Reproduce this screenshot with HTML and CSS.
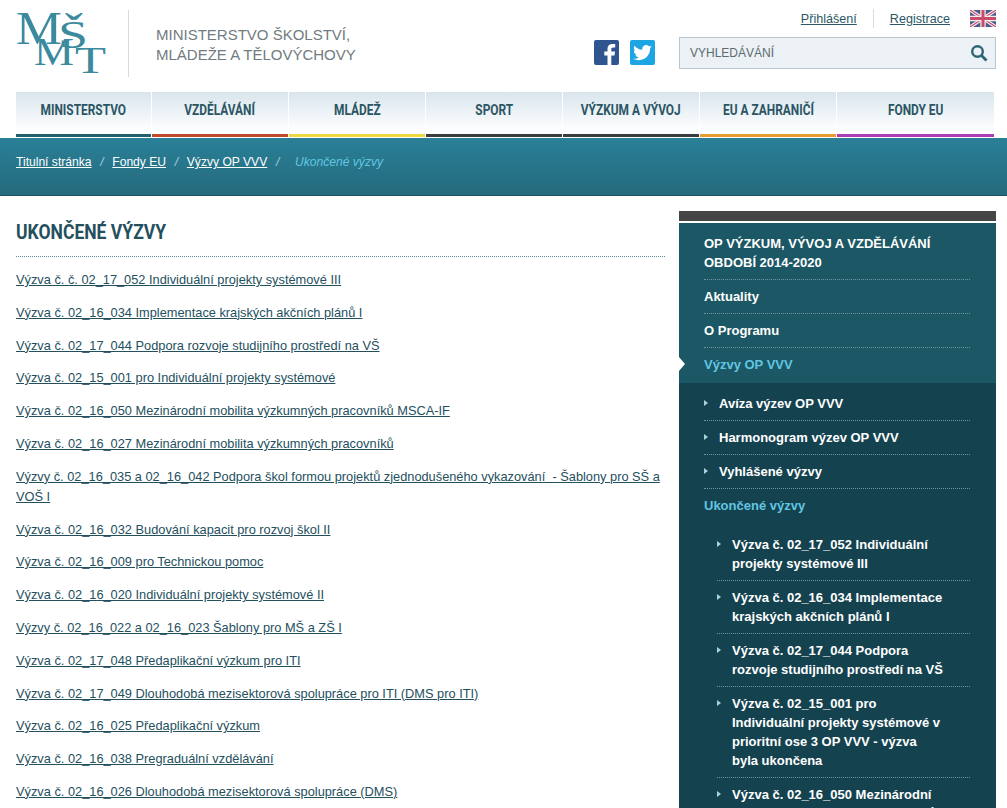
FILE: index.html
```html
<!DOCTYPE html>
<html lang="cs">
  <head>
    <meta charset="UTF-8" />
    <title>Ukončené výzvy</title>
    <meta name="viewport" content="width=device-width, initial-scale=1" />
    <link rel="stylesheet" href="styles.css">
  </head>
  <body>
    <header class="top">
      <a class="logo" href="#">
        <svg width="92" height="66" viewBox="0 0 92 66">
          <text x="0" y="32" class="logo-m1" textLength="46" lengthAdjust="spacingAndGlyphs">M</text>
          <text x="42" y="36" class="logo-s" textLength="30" lengthAdjust="spacingAndGlyphs">Š</text>
          <text x="18" y="53" class="logo-m2" textLength="40" lengthAdjust="spacingAndGlyphs">M</text>
          <text x="59" y="61" class="logo-t" textLength="31" lengthAdjust="spacingAndGlyphs">T</text>
        </svg>
      </a>
      <div class="ministry">MINISTERSTVO ŠKOLSTVÍ,<br />MLÁDEŽE A TĚLOVÝCHOVY</div>
      <div class="social">
        <a class="fb" href="#">
          <svg width="25" height="25" viewBox="0 0 25 25"><path d="M17.3 25v-9.6h3.2l.5-3.8h-3.7V9.3c0-1.1.3-1.8 1.9-1.8h2V4.1c-.4 0-1.500-.1-2.900-.1-2.900 0-4.800 1.700-4.800 4.900v2.700H10.300v3.800h3.200V25z" /></svg>
        </a>
        <a class="tw" href="#">
          <svg width="19" height="16" viewBox="0 0 24 20"><path d="M24 2.400c-.9.4-1.800.7-2.800.8 1-.6 1.800-1.600 2.200-2.700-1 .6-2 1-3.100 1.200C19.300.7 18 0 16.600 0c-2.700 0-4.900 2.200-4.900 4.900 0 .4 0 .8.100 1.100C7.700 5.800 4.100 3.800 1.700.9c-.4.700-.7 1.600-.7 2.500 0 1.700.9 3.200 2.200 4.100-.8 0-1.600-.2-2.200-.6v.1c0 2.400 1.700 4.400 3.900 4.800-.4.100-.8.200-1.300.2-.3 0-.6 0-.9-.1.600 2 2.400 3.400 4.600 3.400-1.700 1.300-3.800 2.100-6.100 2.100-.4 0-.8 0-1.200-.1C2.200 18.200 4.800 19 7.500 19c9.100 0 14-7.500 14-14v-.6c1-.7 1.800-1.600 2.500-2z" /></svg>
        </a>
      </div>
      <div class="tools">
        <div class="userbar">
          <a href="#">Přihlášení</a>
          <span class="sep"></span>
          <a href="#">Registrace</a>
          <svg class="flag" width="26" height="17" viewBox="0 0 26 17">
            <rect width="26" height="17" fill="#3d4a80" />
            <path d="M0 0L26 17M26 0L0 17" stroke="#f2eef0" stroke-width="3.400" />
            <path d="M0 0L26 17M26 0L0 17" stroke="#c8385a" stroke-width="1.100" />
            <path d="M13 0V17M0 8.500H26" stroke="#f2eef0" stroke-width="5.400" />
            <path d="M13 0V17M0 8.500H26" stroke="#c8385a" stroke-width="3" />
          </svg>
        </div>
        <form class="search">
          <span class="search-label">VYHLEDÁVÁNÍ</span>
          <svg width="18" height="18" viewBox="0 0 18 18">
            <circle cx="7.500" cy="7.500" r="5.300" fill="none" stroke="#2b6475" stroke-width="2.400" />
            <path d="M11.500 11.500L16.500 16.500" stroke="#2b6475" stroke-width="2.800" />
          </svg>
        </form>
      </div>
    </header>

    <nav class="mainnav">
      <a class="c-teal" href="#"><span>MINISTERSTVO</span></a>
      <a class="c-red" href="#"><span>VZDĚLÁVÁNÍ</span></a>
      <a class="c-yellow" href="#"><span>MLÁDEŽ</span></a>
      <a class="c-dark" href="#"><span>SPORT</span></a>
      <a class="c-dark" href="#"><span>VÝZKUM A VÝVOJ</span></a>
      <a class="c-orange" href="#"><span>EU A ZAHRANIČÍ</span></a>
      <a class="c-purple" href="#"><span>FONDY EU</span></a>
    </nav>

    <div class="crumbs">
      <a href="#">Titulní stránka</a>
      <i>/</i>
      <a href="#">Fondy EU</a>
      <i>/</i>
      <a href="#">Výzvy OP VVV</a>
      <i>/</i>
      <em>Ukončené výzvy</em>
    </div>

    <div class="page">
      <main class="content">
        <h1><span>UKONČENÉ VÝZVY</span></h1>
        <ul class="calls">
          <li><a href="#">Výzva č. č. 02_17_052 Individuální projekty systémové III</a></li>
          <li><a href="#">Výzva č. 02_16_034 Implementace krajských akčních plánů I</a></li>
          <li><a href="#">Výzva č. 02_17_044 Podpora rozvoje studijního prostředí na VŠ</a></li>
          <li><a href="#">Výzva č. 02_15_001 pro Individuální projekty systémové</a></li>
          <li><a href="#">Výzva č. 02_16_050 Mezinárodní mobilita výzkumných pracovníků MSCA-IF</a></li>
          <li><a href="#">Výzva č. 02_16_027 Mezinárodní mobilita výzkumných pracovníků</a></li>
          <li><a href="#">Výzvy č. 02_16_035 a 02_16_042 Podpora škol formou projektů zjednodušeného vykazování &nbsp;- Šablony pro SŠ a VOŠ I</a></li>
          <li><a href="#">Výzva č. 02_16_032 Budování kapacit pro rozvoj škol II</a></li>
          <li><a href="#">Výzva č. 02_16_009 pro Technickou pomoc</a></li>
          <li><a href="#">Výzva č. 02_16_020 Individuální projekty systémové II</a></li>
          <li><a href="#">Výzvy č. 02_16_022 a 02_16_023 Šablony pro MŠ a ZŠ I</a></li>
          <li><a href="#">Výzva č. 02_17_048 Předaplikační výzkum pro ITI</a></li>
          <li><a href="#">Výzva č. 02_17_049 Dlouhodobá mezisektorová spolupráce pro ITI (DMS pro ITI)</a></li>
          <li><a href="#">Výzva č. 02_16_025 Předaplikační výzkum</a></li>
          <li><a href="#">Výzva č. 02_16_038 Pregraduální vzdělávání</a></li>
          <li><a href="#">Výzva č. 02_16_026 Dlouhodobá mezisektorová spolupráce (DMS)</a></li>
        </ul>
      </main>

      <aside class="side">
        <div class="side-bar"></div>
        <div class="side-top">
          <a class="row row-title" href="#">OP VÝZKUM, VÝVOJ A VZDĚLÁVÁNÍ<br />OBDOBÍ 2014-2020</a>
          <a class="row" href="#">Aktuality</a>
          <a class="row" href="#">O Programu</a>
          <a class="row row-active" href="#">Výzvy OP VVV</a>
        </div>
        <div class="side-sub">
          <a class="row row-arrow" href="#">Avíza výzev OP VVV</a>
          <a class="row row-arrow" href="#">Harmonogram výzev OP VVV</a>
          <a class="row row-arrow" href="#">Vyhlášené výzvy</a>
          <a class="row row-current" href="#">Ukončené výzvy</a>
          <div class="side-deep">
            <a class="deep" href="#">Výzva č. 02_17_052 Individuální<br />projekty systémové III</a>
            <a class="deep" href="#">Výzva č. 02_16_034 Implementace<br />krajských akčních plánů I</a>
            <a class="deep" href="#">Výzva č. 02_17_044 Podpora<br />rozvoje studijního prostředí na VŠ</a>
            <a class="deep" href="#">Výzva č. 02_15_001 pro<br />Individuální projekty systémové v<br />prioritní ose 3 OP VVV - výzva<br />byla ukončena</a>
            <a class="deep" href="#">Výzva č. 02_16_050 Mezinárodní<br />mobilita výzkumných pracovníků</a>
          </div>
        </div>
      </aside>
    </div>
  </body>
</html>
```

FILE: styles.css
```css
html,
body {
  height: 808px;
  overflow: hidden;
}
body {
  margin: 0;
  background: #fff;
  color: #24505e;
  font-family: "Liberation Sans", Arial, sans-serif;
  font-size: 12.800px;
}
a {
  color: inherit;
}

/* header */
.top {
  display: flex;
  height: 92px;
  box-sizing: border-box;
  padding-left: 16px;
}
.logo {
  display: block;
  width: 113px;
  height: 67px;
  margin-top: 10px;
  padding-top: 2px;
  box-sizing: border-box;
  border-right: 1px solid #d5dcdf;
}
.logo svg {
  overflow: visible;
}
.logo text {
  font-family: "Liberation Serif", serif;
  fill: #3b8a9e;
}
.logo-m1 {
  font-size: 46px;
}
.logo-s {
  font-size: 40px;
}
.logo-m2 {
  font-size: 40px;
}
.logo-t {
  font-size: 38px;
}
.ministry {
  margin: 25px 0 0 27px;
  color: #717b80;
  font-size: 15px;
  line-height: 20px;
}
.social {
  display: flex;
  gap: 11px;
  margin: 40px 0 0 auto;
}
.social a {
  display: flex;
  align-items: center;
  justify-content: center;
  width: 25px;
  height: 25px;
  border-radius: 2px;
  overflow: hidden;
}
.social svg {
  fill: #fff;
}
.fb {
  background: #2f5590;
}
.tw {
  background: #1ca5e2;
}
.tools {
  width: 317px;
  margin: 0 11px 0 24px;
}
.userbar {
  display: flex;
  align-items: center;
  justify-content: flex-end;
  height: 27px;
  padding-top: 10px;
  box-sizing: border-box;
  font-size: 12.600px;
  color: #2c5866;
}
.sep {
  width: 1px;
  height: 19px;
  margin: 0 16px;
  background: #d5dcdf;
}
.flag {
  margin-left: 20px;
  opacity: 0.9;
}
.search {
  display: flex;
  align-items: center;
  justify-content: space-between;
  height: 32px;
  margin: 10px 0 0;
  padding: 0 7px 0 10px;
  box-sizing: border-box;
  background: #ebf1f5;
  border: 1px solid #b7c7cd;
}
.search-label {
  font-size: 12px;
  color: #5d6a70;
}

/* main menu */
.mainnav {
  display: grid;
  grid-template-columns: 135px repeat(5, 136px) 1fr;
  gap: 1px;
  margin: 0 13px 0 16px;
  height: 45px;
}
.mainnav a {
  display: block;
  height: 45px;
  box-sizing: border-box;
  padding-top: 9px;
  text-align: center;
  text-decoration: none;
  font-family: Roboto, sans-serif;
  font-weight: 700;
  font-size: 14px;
  line-height: 18px;
  color: #2b5563;
  background: linear-gradient(#d9e5ec, #fbfdfe 85%);
  border-bottom: 3px solid #333;
}
.mainnav span {
  display: inline-block;
  transform: scaleX(0.85);
  white-space: nowrap;
}
.mainnav .c-teal {
  border-color: #24606c;
}
.mainnav .c-red {
  border-color: #c2482c;
}
.mainnav .c-yellow {
  border-color: #ecd83f;
}
.mainnav .c-dark {
  border-color: #3a3d3f;
}
.mainnav .c-orange {
  border-color: #e59c30;
}
.mainnav .c-purple {
  border-color: #aa3fb5;
}

/* breadcrumb */
.crumbs {
  display: flex;
  gap: 8px;
  height: 58px;
  margin-top: 1px;
  padding: 16px 0 0 16px;
  box-sizing: border-box;
  background: linear-gradient(#2a8098, #246a7c);
  border-bottom: 1px solid #1d5463;
  font-size: 12.100px;
  line-height: 17px;
  color: #fff;
}
.crumbs i {
  color: #a7d2de;
  margin: 0 0.700px;
}
.crumbs em {
  margin-left: 7px;
  color: #62c6e2;
}

/* content */
.page {
  display: flex;
  padding-left: 16px;
}
.content {
  width: 649px;
  margin-right: 14px;
}
h1 {
  margin: 23px 0 0;
  padding-bottom: 10px;
  height: 27px;
  border-bottom: 1px dotted #5f8a94;
  font-family: Roboto, sans-serif;
  font-weight: 700;
  font-size: 21px;
  line-height: 27px;
  color: #24505e;
}
h1 span {
  display: inline-block;
  transform: scaleX(0.835);
  transform-origin: left;
}
.calls {
  list-style: none;
  margin: 13px 0 0;
  padding: 0;
}
.calls li {
  margin-bottom: 12.800px;
  line-height: 20px;
}

/* side menu */
.side {
  width: 317px;
  margin-top: 15px;
  color: #fff;
  font-size: 13px;
  font-weight: 700;
}
.side-bar {
  height: 10px;
  margin-bottom: 2px;
  background: #454545;
}
.side-top {
  position: relative;
  padding: 11px 26px 9px 25px;
  background: #1b5764;
}
.side-top::before {
  content: "";
  position: absolute;
  left: 0;
  top: 134px;
  border: 7px solid transparent;
  border-left: 6px solid #fff;
}
.row {
  display: block;
  padding: 7px 0;
  line-height: 19px;
  text-decoration: none;
  border-bottom: 1px dotted #6c979f;
}
.row-title {
  padding-top: 0;
}
.row-active {
  padding-bottom: 0;
  border-bottom: 0;
  color: #62c6e2;
}
.side-sub {
  padding: 4px 26px 0 25px;
  background: #15424f;
  height: 500px;
}
.row-arrow {
  position: relative;
  padding-left: 15px;
}
.row-arrow::before,
.deep::before {
  content: "";
  position: absolute;
  left: 0;
  top: 13px;
  border: 3px solid transparent;
  border-left: 4px solid #a9d3dc;
}
.row-current {
  padding: 0;
  margin-top: 7px;
  border-bottom: 0;
  color: #62c6e2;
}
.side-deep {
  margin: 13px 0 0 13px;
}
.deep {
  position: relative;
  display: block;
  padding: 7px 0 7px 15px;
  line-height: 19px;
  text-decoration: none;
  border-bottom: 1px dotted #6c979f;
}
```
